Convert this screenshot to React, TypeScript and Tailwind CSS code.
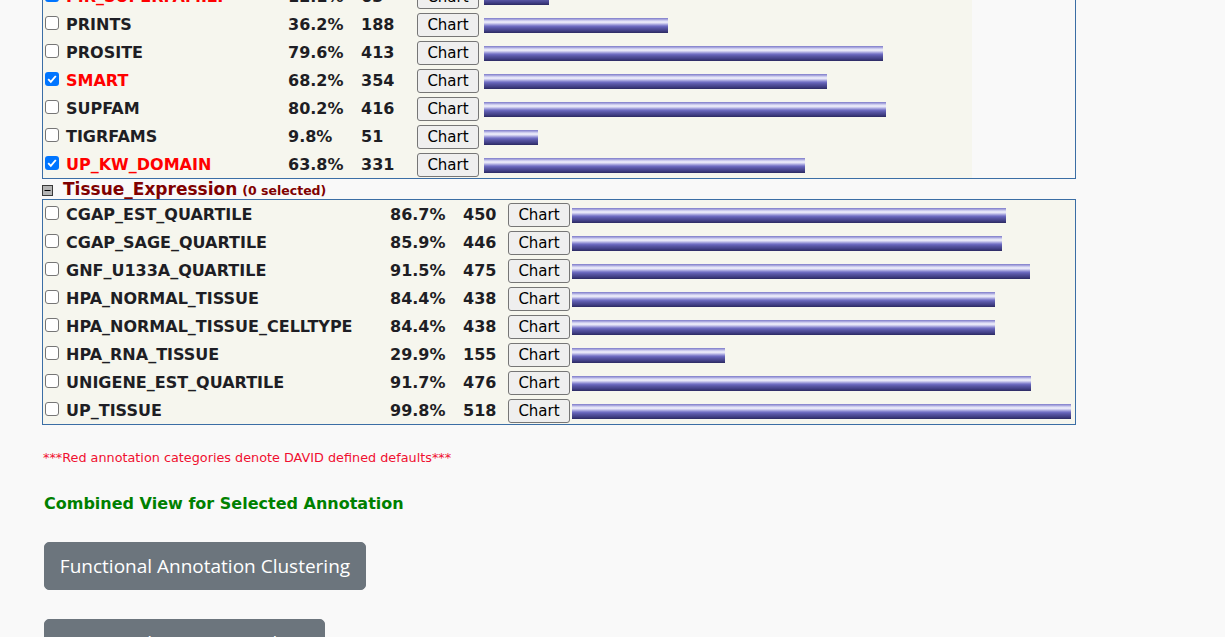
import React from 'react';

type Row = { name: string; pct: string; count: number; bar: number; red?: boolean; checked?: boolean };

const domains: Row[] = [
  { name: 'PIR_SUPERFAMILY', pct: '12.1%', count: 63, bar: 65, red: true, checked: true },
  { name: 'PRINTS', pct: '36.2%', count: 188, bar: 184 },
  { name: 'PROSITE', pct: '79.6%', count: 413, bar: 399 },
  { name: 'SMART', pct: '68.2%', count: 354, bar: 343, red: true, checked: true },
  { name: 'SUPFAM', pct: '80.2%', count: 416, bar: 402 },
  { name: 'TIGRFAMS', pct: '9.8%', count: 51, bar: 54 },
  { name: 'UP_KW_DOMAIN', pct: '63.8%', count: 331, bar: 321, red: true, checked: true },
];

const tissue: Row[] = [
  { name: 'CGAP_EST_QUARTILE', pct: '86.7%', count: 450, bar: 434 },
  { name: 'CGAP_SAGE_QUARTILE', pct: '85.9%', count: 446, bar: 430 },
  { name: 'GNF_U133A_QUARTILE', pct: '91.5%', count: 475, bar: 458 },
  { name: 'HPA_NORMAL_TISSUE', pct: '84.4%', count: 438, bar: 423 },
  { name: 'HPA_NORMAL_TISSUE_CELLTYPE', pct: '84.4%', count: 438, bar: 423 },
  { name: 'HPA_RNA_TISSUE', pct: '29.9%', count: 155, bar: 153 },
  { name: 'UNIGENE_EST_QUARTILE', pct: '91.7%', count: 476, bar: 459 },
  { name: 'UP_TISSUE', pct: '99.8%', count: 518, bar: 499 },
];

const barCls =
  'h-[15px] bg-[linear-gradient(to_bottom,#7c7ac8_0%,#a9a7de_10%,#dcdcf5_20%,#efeffb_28%,#c4c3eb_38%,#8d8bd2_48%,#6664bb_58%,#55539f_70%,#45438c_82%,#2c2a62_100%)]';

// native-looking checkbox, drawn so the size matches the screenshot
const Check = ({ on }: { on?: boolean }) =>
  on ? (
    <span className="flex items-center justify-center w-[14px] h-[14px] rounded-[3px] bg-[#0075ff]">
      <svg width="12" height="12" viewBox="0 0 12 12">
        <path d="M2.2 6.2 L4.8 8.8 L9.8 3" fill="none" stroke="#fff" strokeWidth="1.9" />
      </svg>
    </span>
  ) : (
    <span className="block w-[14px] h-[14px] rounded-[3px] border border-[#767676] bg-white" />
  );

const AnnotRow = ({ row, cols }: { row: Row; cols: string }) => (
  <div className={`grid ${cols} h-[28px] pt-[2px] items-center`}>
    <div className="flex items-center pl-[2px]">
      <span className="mb-[4px]">
        <Check on={row.checked} />
      </span>
      <span className={`ml-[7px] font-bold text-[16px] ${row.red ? 'text-[#ff0000]' : 'text-[#1e1e24]'}`}>
        {row.name}
      </span>
    </div>
    <span className="font-bold text-[16px] text-[#1e1e24]">{row.pct}</span>
    <span className="font-bold text-[16px] text-[#1e1e24]">{row.count}</span>
    <div>
      <button className="block w-[62px] h-[24px] border border-[#767676] rounded-[3px] bg-[#efefef] text-[15px] leading-none text-black">
        Chart
      </button>
    </div>
    <div className={barCls} style={{ width: row.bar }} />
  </div>
);

const MinusBox = () => (
  <svg width="11" height="11" viewBox="0 0 11 11">
    <rect x="0.5" y="0.5" width="10" height="10" fill="#b5b5b5" stroke="#3a3a3a" />
    <line x1="2.5" y1="5.5" x2="8.5" y2="5.5" stroke="#000" />
  </svg>
);

export default function App() {
  return (
    <div className="min-h-screen bg-[#f9f9f9] font-['DejaVu_Sans','Verdana',sans-serif] overflow-hidden">
      <div className="pl-[42px] -mt-[19px]">
        <div className="w-[1034px] border border-[#3b6ea5]">
          <div className="w-[929px] bg-[#f6f6ee]">
            {domains.map((r) => (
              <AnnotRow key={r.name} row={r} cols="grid-cols-[245px_73px_56px_67px_1fr]" />
            ))}
          </div>
        </div>

        <div className="h-[20px] pt-[2px] flex items-center">
          <MinusBox />
          <span className="ml-[10px] font-bold text-[17px] text-[#800000]">Tissue_Expression</span>
          <span className="ml-[5px] mt-[2px] font-bold text-[12.5px] text-[#800000]">(0 selected)</span>
        </div>

        <div className="w-[1034px] border border-[#3b6ea5]">
          <div className="bg-[#f6f6ee]">
            {tissue.map((r) => (
              <AnnotRow key={r.name} row={r} cols="grid-cols-[347px_73px_45px_64px_1fr]" />
            ))}
          </div>
        </div>
      </div>

      <div className="pl-[43px] mt-[25px] leading-[16px] text-[12.8px] text-[#f01030]">
        ***Red annotation categories denote DAVID defined defaults***
      </div>

      <div className="pl-[44px] mt-[28px] leading-[20px] font-bold text-[16px] text-[#008000]">
        Combined View for Selected Annotation
      </div>

      <div className="pl-[44px] mt-[28px] flex flex-col items-start gap-[29px] font-['Open_Sans',sans-serif]">
        <button className="w-[322px] h-[48px] rounded-[5px] bg-[#6c757d] border border-[#6c757d] text-white text-[19px]">
          Functional Annotation Clustering
        </button>
        <button className="w-[281px] h-[48px] rounded-[5px] bg-[#6c757d] border border-[#6c757d] text-white text-[19px]">
          Functional Annotation Chart
        </button>
      </div>
    </div>
  );
}
